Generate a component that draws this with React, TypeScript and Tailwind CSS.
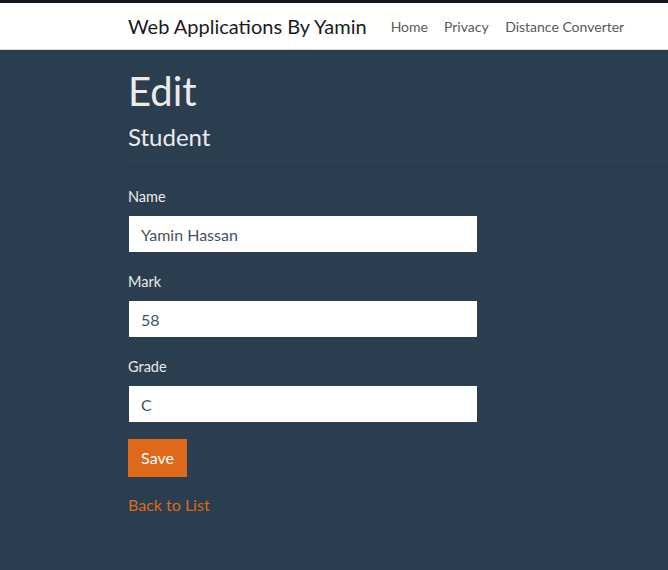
export default function App() {
  const fields = [
    { label: "Name", value: "Yamin Hassan" },
    { label: "Mark", value: "58" },
    { label: "Grade", value: "C" },
  ];

  return (
    <div className="min-h-[570px] bg-[#2b3e50] font-['Lato',sans-serif] text-[#ebebeb]">
      {/* top strip */}
      <div className="h-[3px] bg-[#111820]" />

      {/* Navbar */}
      <nav className="h-[47px] bg-white border-b border-[#dadada] flex items-center pl-[128px]">
        <span className="text-[20px] text-[#1a1a1a] mr-[16px] leading-[28px]">Web Applications By Yamin</span>
        <div className="flex items-center text-[14px] text-[#595959]">
          <a className="px-[8px]">Home</a>
          <a className="px-[8px]">Privacy</a>
          <a className="px-[8.5px]">Distance Converter</a>
        </div>
      </nav>

      {/* Main */}
      <main className="pl-[128px]">
        <h1 className="text-[40px] leading-[48px] mt-[17px] mb-[7px]">Edit</h1>
        <h4 className="text-[24px] leading-[29px]">Student</h4>
        <hr className="mt-[15px] mb-[19px] border-0 border-t border-[#25364a]" />

        <form>
          {fields.map((f, i) => (
            <div key={f.label} className={i < fields.length - 1 ? "mb-[19px]" : "mb-[17px]"}>
              <label className="block text-[14.5px] leading-[22px] mb-[8px]">{f.label}</label>
              <input
                readOnly
                value={f.value}
                className="block ml-[1px] w-[348px] h-[36px] px-[12px] border-0 bg-white text-[16px] text-[#465260] outline-none font-['Lato',sans-serif]"
              />
            </div>
          ))}
          <button
            type="button"
            className="h-[38px] w-[59px] bg-[#df691a] text-white text-[16px] font-['Lato',sans-serif]"
          >
            Save
          </button>
        </form>

        <div className="mt-[16px]">
          <a className="text-[16px] leading-[24px] text-[#df691a]">Back to List</a>
        </div>
      </main>
    </div>
  );
}
